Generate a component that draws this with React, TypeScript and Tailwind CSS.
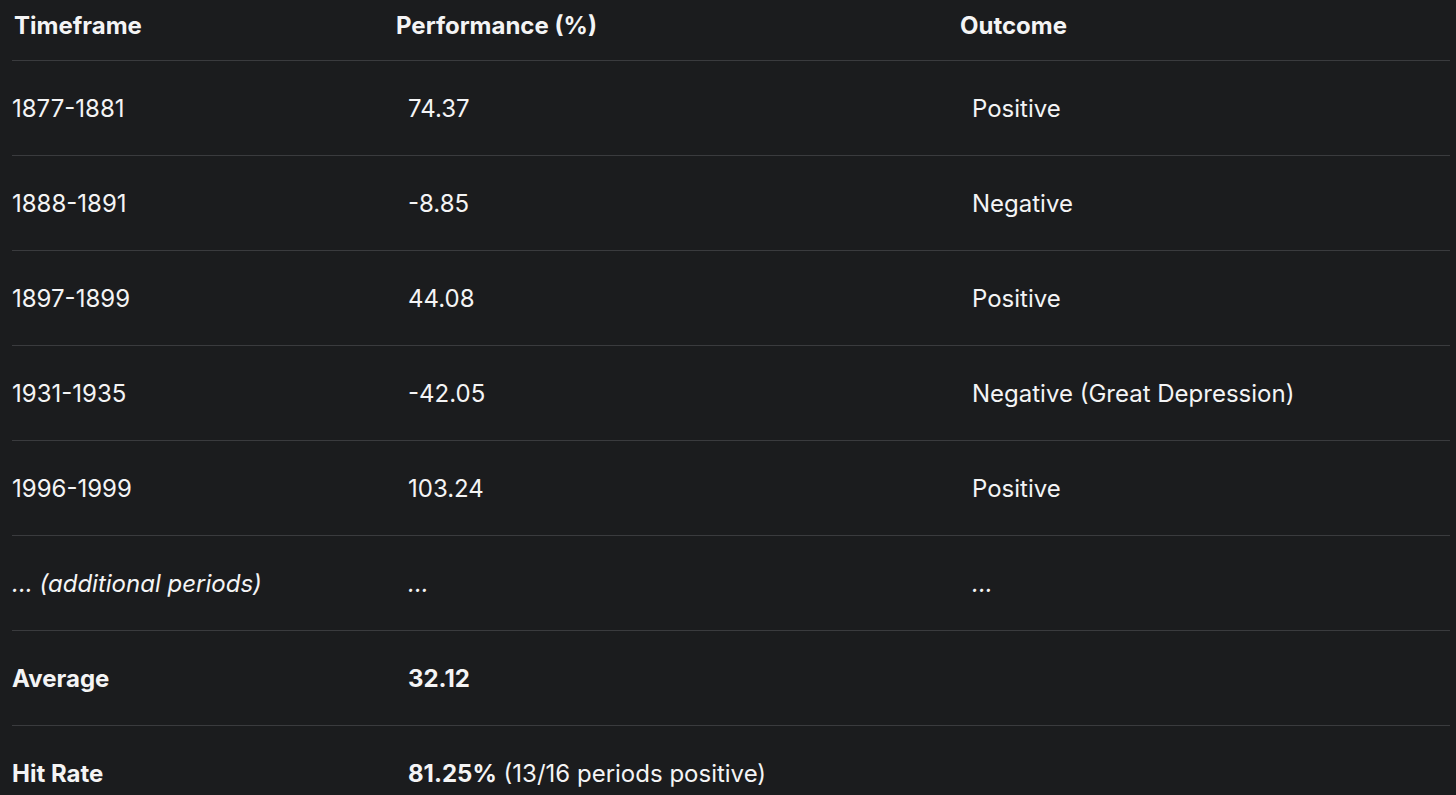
const rows = [
  { time: "1877-1881", perf: "74.37", outcome: "Positive" },
  { time: "1888-1891", perf: "-8.85", outcome: "Negative" },
  { time: "1897-1899", perf: "44.08", outcome: "Positive" },
  { time: "1931-1935", perf: "-42.05", outcome: "Negative (Great Depression)" },
  { time: "1996-1999", perf: "103.24", outcome: "Positive" },
];

const App = () => {
  return (
    <div className="w-[1456px] h-[795px] overflow-hidden bg-[#1b1c1e] text-[#f4f4f5] font-['Inter','Liberation_Sans',sans-serif] text-[24px]">
      <div className="ml-[12px] w-[1438px]">
        {/* header */}
        <div className="grid grid-cols-[384px_564px_490px] h-[60px] pt-[10px] leading-[32px] font-bold">
          <div className="pl-[2px]">Timeframe</div>
          <div>Performance (%)</div>
          <div>Outcome</div>
        </div>

        {rows.map((r) => (
          <div
            key={r.time}
            className="grid grid-cols-[384px_564px_490px] h-[95px] pt-[2px] items-center border-t border-[#3a3b3e]"
          >
            <div>{r.time}</div>
            <div className="pl-[12px]">{r.perf}</div>
            <div className="pl-[12px]">{r.outcome}</div>
          </div>
        ))}

        <div className="grid grid-cols-[384px_564px_490px] h-[95px] pt-[2px] items-center border-t border-[#3a3b3e] italic">
          <div>... (additional periods)</div>
          <div className="pl-[12px]">...</div>
          <div className="pl-[12px]">...</div>
        </div>

        <div className="grid grid-cols-[384px_564px_490px] h-[95px] pt-[2px] items-center border-t border-[#3a3b3e] font-bold">
          <div>Average</div>
          <div className="pl-[12px]">32.12</div>
          <div></div>
        </div>

        <div className="grid grid-cols-[384px_564px_490px] h-[95px] pt-[2px] items-center border-t border-[#3a3b3e]">
          <div className="font-bold">Hit Rate</div>
          <div className="pl-[12px]">
            <span className="font-bold">81.25%</span> (13/16 periods positive)
          </div>
          <div></div>
        </div>
      </div>
    </div>
  );
};

export default App;
